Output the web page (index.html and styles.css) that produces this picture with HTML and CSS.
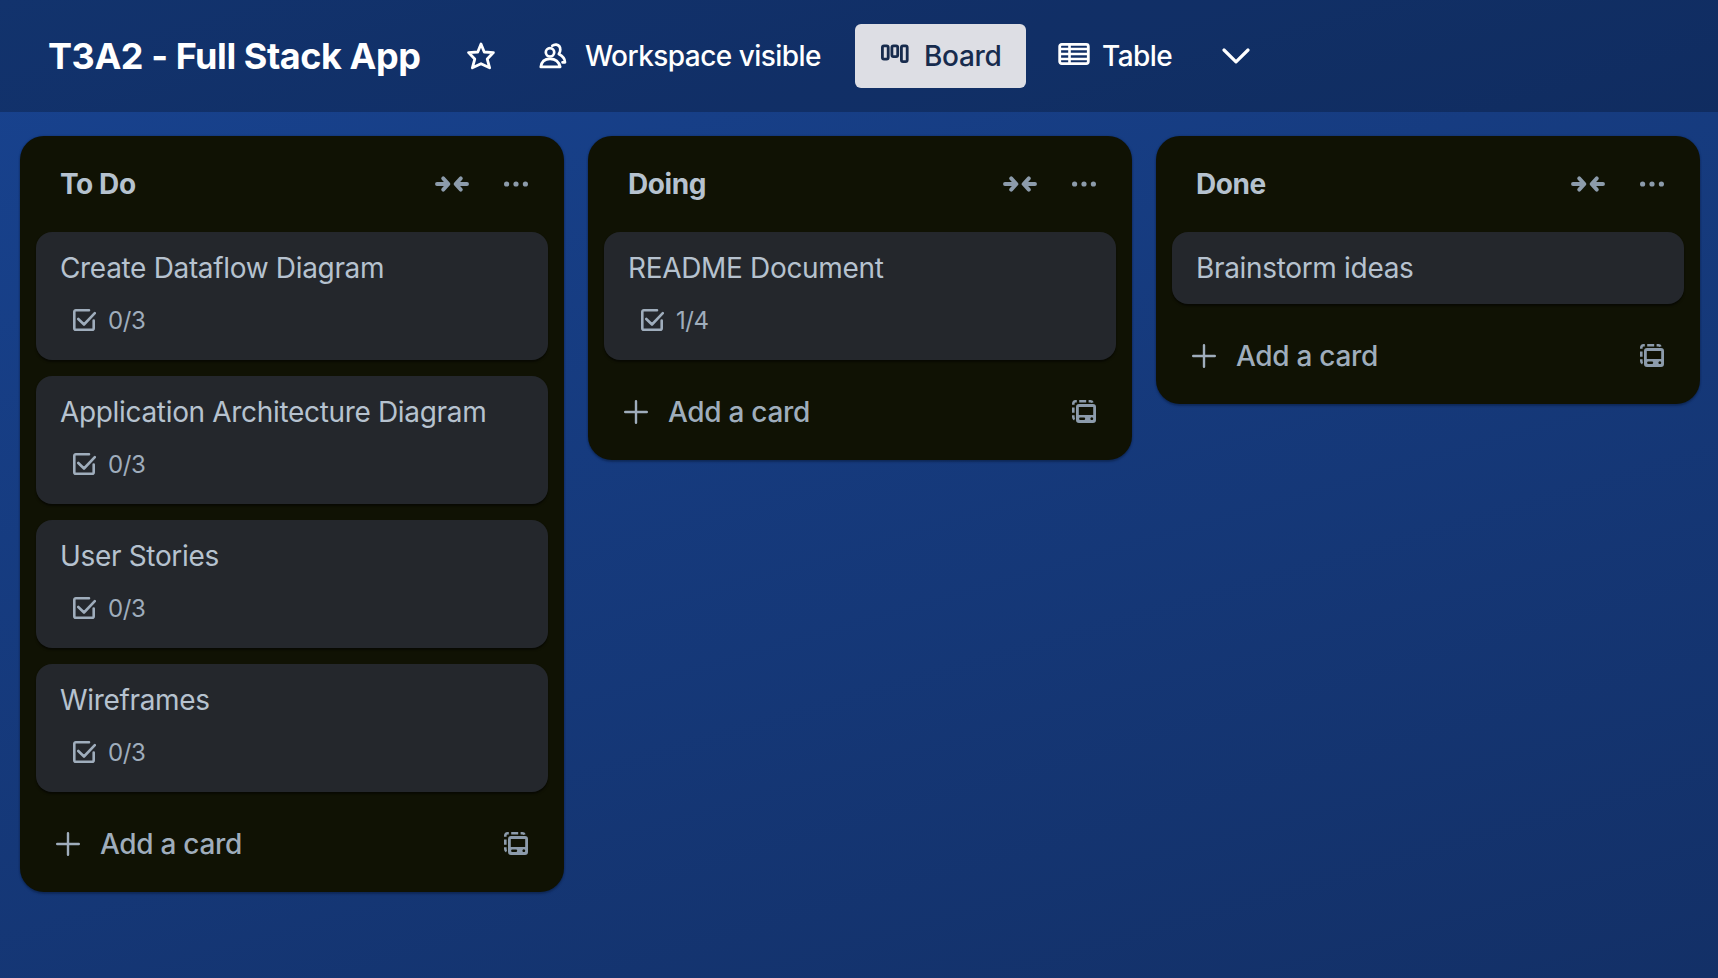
FILE: index.html
```html
<!DOCTYPE html>
<html lang="en">
<head>
<meta charset="utf-8">
<title>T3A2 - Full Stack App</title>
<link rel="stylesheet" href="styles.css">
</head>
<body>
<svg class="sprite" aria-hidden="true">
  <symbol id="i-collapse" viewBox="0 0 36 18">
    <path d="M3 9H13.500M9.200 3.400L14.400 9l-5.200 5.600M33 9H22.500M26.800 3.400L21.600 9l5.200 5.600" fill="none" stroke="currentColor" stroke-width="3.900" stroke-linecap="round" stroke-linejoin="round"/>
  </symbol>
  <symbol id="i-more" viewBox="0 0 24 6">
    <g fill="currentColor"><circle cx="2.6" cy="3" r="2.6"/><circle cx="12" cy="3" r="2.6"/><circle cx="21.4" cy="3" r="2.6"/></g>
  </symbol>
  <symbol id="i-check" viewBox="0 0 24 24">
    <path d="M17 2.3H3.8a1.5 1.5 0 0 0-1.5 1.5v16.4a1.5 1.5 0 0 0 1.5 1.5h16.4a1.5 1.5 0 0 0 1.5-1.5V12.500M6.300 11L12 16.500 22.800 5.200" fill="none" stroke="currentColor" stroke-width="2.600" stroke-linecap="round" stroke-linejoin="round"/>
  </symbol>
  <symbol id="i-plus" viewBox="0 0 24 24">
    <path d="M12 1.200V22.800M1.200 12H22.800" fill="none" stroke="currentColor" stroke-width="2.4" stroke-linecap="round"/>
  </symbol>
  <symbol id="i-template" viewBox="0 0 24 23">
    <path d="M1.300 4.800V3.600Q1.300 1.300 3.600 1.300H4.800M7.200 1.300H14.200M16.600 1.300H18.400Q20 1.300 20.500 2.600M1.300 7.500V12.800M1.300 15.300V17Q1.300 18.600 2.600 19.200" fill="none" stroke="currentColor" stroke-width="2.600"/>
    <path fill="currentColor" fill-rule="evenodd" d="M7 4H21a3 3 0 0 1 3 3V20a3 3 0 0 1-3 3H7a3 3 0 0 1-3-3V7a3 3 0 0 1 3-3zM6.800 7V15H21.200V7zM8.300 17.500a1.200 1.200 0 0 0 0 2.400H12a1.200 1.200 0 0 0 0-2.400zM19.800 17.300a1.400 1.400 0 1 0 .01 0z"/>
  </symbol>
</svg>

<header class="topbar">
  <h1 class="title">T3A2 - Full Stack App</h1>
  <svg class="star" viewBox="0 0 26 26"><path d="M13 1.800L16 9.300 24.500 9.800 18.800 15.800 21 24 13 20.200 5 24 7.200 15.800 1.500 9.800 10 9.300z" fill="none" stroke="currentColor" stroke-width="2.600" stroke-linejoin="round"/></svg>
  <div class="visibility">
    <svg class="people" viewBox="0 0 28 26" fill="none" stroke="currentColor" stroke-width="2.700" stroke-linejoin="round" stroke-linecap="round"><circle cx="11" cy="9.300" r="4.200"/><path d="M1.800 23.900Q2.800 15.800 11 15.800T21.200 23.900z"/><path d="M13.300 2.800Q15 1.400 17.300 1.600Q21.300 2.300 21.300 6.700Q21.300 9 19.800 11Q26 14.300 26 19.300H23.500"/></svg>
    <span class="nav-text visibility-text">Workspace visible</span>
  </div>
  <button class="view view-active">
    <svg class="board" viewBox="0 0 28 20" fill="none" stroke="currentColor" stroke-width="2.800"><rect x="1.400" y="1.900" width="5.800" height="13.200" rx="1.600"/><rect x="10.900" y="1.900" width="5.800" height="10.700" rx="1.600"/><rect x="20.400" y="1.900" width="5.800" height="15.700" rx="1.600"/></svg>
    <span class="nav-text board-text">Board</span>
  </button>
  <button class="view view-table">
    <svg class="table" viewBox="0 0 32 22" fill="none" stroke="currentColor" stroke-width="2.800"><rect x="1.700" y="1.400" width="28.600" height="19.200" rx="2"/><path d="M11.500 1V21M2 6H30M2 11H30M2 16H30" stroke-width="2.600"/></svg>
    <span class="nav-text table-text">Table</span>
  </button>
  <svg class="chevron" viewBox="0 0 28 16"><path d="M2 2L14 13.800 26 2" fill="none" stroke="currentColor" stroke-width="3.200" stroke-linecap="round" stroke-linejoin="round"/></svg>
</header>

<main class="lists">
  <section class="list">
    <div class="list-head"><h2 class="list-name">To Do</h2><svg class="collapse"><use href="#i-collapse"/></svg><svg class="more"><use href="#i-more"/></svg></div>
    <div class="cards">
      <article class="card"><div class="card-name">Create Dataflow Diagram</div><div class="badge"><svg class="check"><use href="#i-check"/></svg>0/3</div></article>
      <article class="card"><div class="card-name">Application Architecture Diagram</div><div class="badge"><svg class="check"><use href="#i-check"/></svg>0/3</div></article>
      <article class="card"><div class="card-name">User Stories</div><div class="badge"><svg class="check"><use href="#i-check"/></svg>0/3</div></article>
      <article class="card"><div class="card-name">Wireframes</div><div class="badge"><svg class="check"><use href="#i-check"/></svg>0/3</div></article>
    </div>
    <div class="add"><svg class="plus"><use href="#i-plus"/></svg><span class="add-text">Add a card</span><svg class="template"><use href="#i-template"/></svg></div>
  </section>
  <section class="list">
    <div class="list-head"><h2 class="list-name">Doing</h2><svg class="collapse"><use href="#i-collapse"/></svg><svg class="more"><use href="#i-more"/></svg></div>
    <div class="cards">
      <article class="card"><div class="card-name">README Document</div><div class="badge"><svg class="check"><use href="#i-check"/></svg>1/4</div></article>
    </div>
    <div class="add"><svg class="plus"><use href="#i-plus"/></svg><span class="add-text">Add a card</span><svg class="template"><use href="#i-template"/></svg></div>
  </section>
  <section class="list">
    <div class="list-head"><h2 class="list-name">Done</h2><svg class="collapse"><use href="#i-collapse"/></svg><svg class="more"><use href="#i-more"/></svg></div>
    <div class="cards">
      <article class="card"><div class="card-name">Brainstorm ideas</div></article>
    </div>
    <div class="add"><svg class="plus"><use href="#i-plus"/></svg><span class="add-text">Add a card</span><svg class="template"><use href="#i-template"/></svg></div>
  </section>
</main>
</body>
</html>
```

FILE: styles.css
```css
* { box-sizing: border-box; }
body {
  margin: 0;
  height: 978px;
  overflow: hidden;
  font-family: Inter, "Liberation Sans", sans-serif;
  background: linear-gradient(164deg, #184390 0%, #133067 100%);
  white-space: nowrap;
}
svg { display: block; flex: none; }
h1, h2 { margin: 0; }
.sprite { position: absolute; width: 0; height: 0; }

.topbar {
  height: 112px;
  padding-left: 48px;
  display: flex;
  align-items: center;
  color: #fff;
  background: rgba(0, 0, 0, 0.24);
}
.title { width: 419px; font-size: 36px; line-height: 44px; font-weight: 700; letter-spacing: -0.44px; }
.star { width: 28px; height: 28px; }
.visibility { display: flex; align-items: center; margin-left: 44px; width: 316px; }
.people { width: 28px; height: 26px; margin-right: 18px; }
.nav-text { font-size: 28px; line-height: 40px; font-weight: 550; letter-spacing: -0.55px; }
.board-text { font-weight: 500; letter-spacing: -0.3px; }
.view { display: flex; align-items: center; height: 64px; border: 0; border-radius: 6px; padding: 0; background: none; color: inherit; font-family: inherit; }
.view-active { width: 171px; padding-left: 26px; background: #dddee4; color: #172b4d; }
.board { width: 28px; height: 20px; margin: -4px 15px 0 0; }
.view-table { padding-left: 32px; width: 196px; }
.table { width: 32px; height: 22px; margin: -4px 12px 0 0; }
.chevron { width: 28px; height: 16px; }

.lists { display: flex; align-items: flex-start; gap: 24px; padding: 24px 20px; }
.list {
  flex: none;
  width: 544px;
  padding: 16px 16px 12px;
  border-radius: 24px;
  background: #101204;
  box-shadow: 0 2px 2px rgba(9, 30, 66, 0.5), 0 0 2px rgba(9, 30, 66, 0.5);
}
.list-head { display: flex; align-items: center; height: 64px; padding: 0 20px 0 24px; margin-bottom: 16px; color: #8c9bab; }
.list-name { flex: 1; font-size: 28px; line-height: 40px; font-weight: 650; letter-spacing: -0.4px; color: #b6c2cf; }
.collapse { width: 36px; height: 18px; margin-right: 34px; }
.more { width: 24px; height: 6px; }
.cards { display: flex; flex-direction: column; gap: 16px; }
.card {
  padding: 16px 24px 8px;
  border-radius: 16px;
  background: #24272c;
  color: #b6c2cf;
  box-shadow: 0 2px 2px rgba(0, 0, 0, 0.5);
}
.card-name { font-size: 28px; line-height: 40px; margin-bottom: 8px; letter-spacing: -0.33px; }
.badge { display: flex; align-items: center; height: 48px; margin-bottom: 8px; padding: 0 0 0 12px; font-size: 24px; letter-spacing: -0.4px; color: #9fadbc; }
.check { width: 24px; height: 24px; margin-right: 12px; }
.add { display: flex; align-items: center; height: 72px; margin-top: 16px; padding: 0 20px; color: #9fadbc; }
.plus { width: 24px; height: 24px; margin-right: 20px; }
.add-text { flex: 1; font-size: 28px; line-height: 40px; font-weight: 500; letter-spacing: -0.3px; }
.template { width: 24px; height: 23px; margin-bottom: 1px; color: #8c9bab; }
```
